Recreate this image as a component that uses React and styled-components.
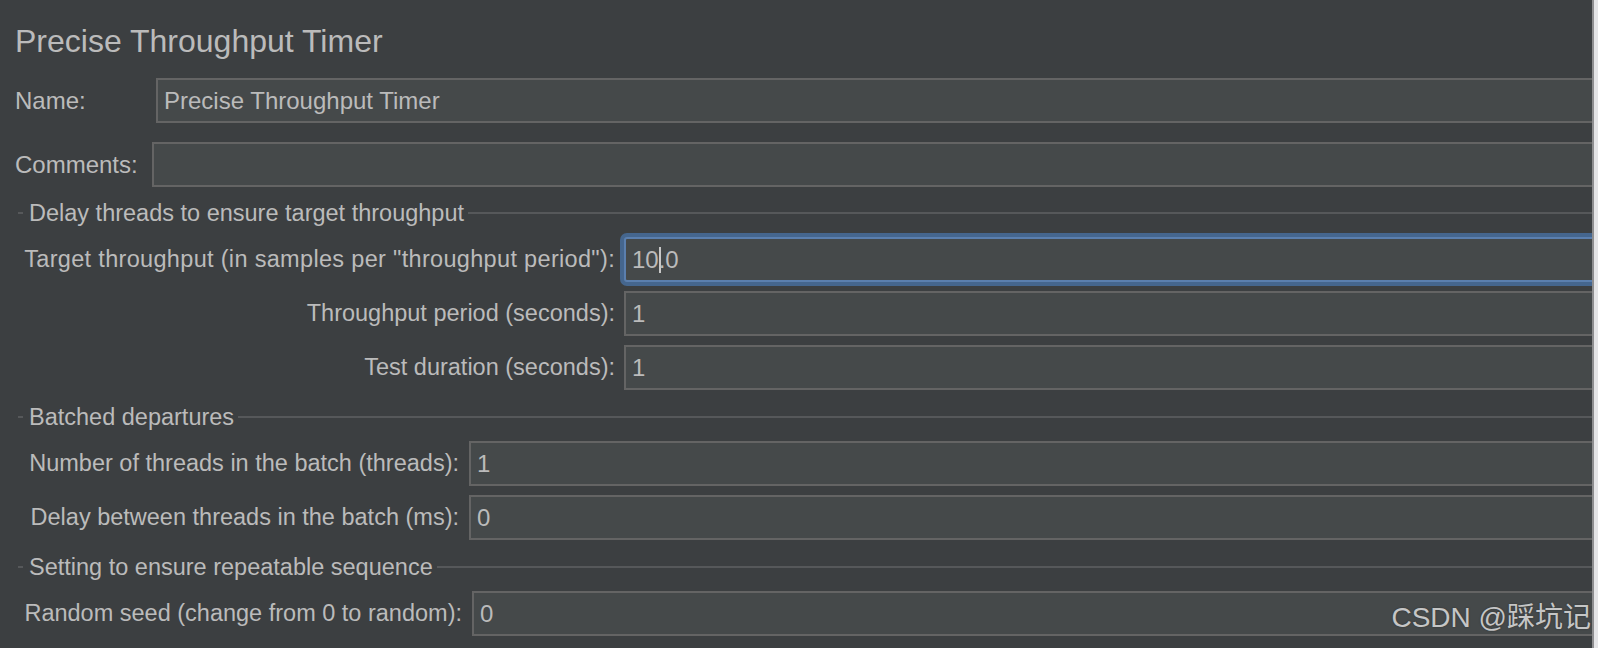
import React from "react";
import styled, { createGlobalStyle } from "styled-components";

const GlobalStyle = createGlobalStyle`
  html, body {
    margin: 0;
    padding: 0;
    background: #3c3f41;
    overflow: hidden;
  }
  * {
    box-sizing: border-box;
  }
`;

const Window = styled.div`
  position: relative;
  display: flex;
  width: 1598px;
  height: 648px;
  background: #3c3f41;
  font-family: "Liberation Sans", Arial, sans-serif;
  color: #bbbbbb;
`;

const Main = styled.div`
  flex: 1;
  display: flex;
  flex-direction: column;
  overflow: hidden;
`;

const SideStrip = styled.div`
  width: 6px;
  background: #e4e4e6;
  border-left: 2px solid #8e8e90;
`;

const Title = styled.h1`
  margin: 21px 0 0 15px;
  height: 40px;
  line-height: 40px;
  font-size: 32px;
  font-weight: normal;
  color: #bbbbbb;
  white-space: nowrap;
`;

const TopRow = styled.div`
  display: flex;
  align-items: center;
  margin-top: ${(p) => p.$top}px;
  padding-left: 15px;
`;

const TopLabel = styled.span`
  width: ${(p) => p.$width}px;
  flex: none;
  font-size: 24px;
  white-space: nowrap;
`;

const Field = styled.div`
  flex: 1;
  display: flex;
  align-items: center;
  height: 45px;
  margin-right: -10px;
  padding-left: 6px;
  background: #45494a;
  border: 2px solid ${(p) => (p.$focused ? "#5b7fae" : "#646464")};
  border-radius: ${(p) => (p.$focused ? "3px" : "0")};
  box-shadow: ${(p) => (p.$focused ? "0 0 0 4px #45668e" : "none")};
  font-size: 24px;
  color: #bbbbbb;
  white-space: nowrap;
`;

const Caret = styled.span`
  display: inline-block;
  width: 2px;
  height: 26px;
  margin-right: -2px;
  background: #c8c8c8;
  vertical-align: -5px;
`;

const Legend = styled.div`
  display: flex;
  align-items: center;
  height: 24px;
  margin-top: ${(p) => p.$top}px;
  font-size: 23.5px;
  white-space: nowrap;
`;

const Dash = styled.span`
  width: 5px;
  height: 2px;
  margin: 0 6px 0 18px;
  background: #56585a;
`;

const Rule = styled.span`
  flex: 1;
  height: 2px;
  margin-left: 4px;
  background: #56585a;
`;

const FieldGrid = styled.div`
  display: grid;
  grid-template-columns: ${(p) => p.$labelWidth}px 1fr;
  column-gap: ${(p) => p.$gap}px;
  row-gap: 9px;
  align-items: center;
  margin-top: 12px;
  padding-left: 24px;
`;

const FieldLabel = styled.span`
  text-align: right;
  font-size: 23.5px;
  letter-spacing: ${(p) => p.$spacing || 0}px;
  white-space: nowrap;
`;

const Watermark = styled.div`
  position: absolute;
  right: 7px;
  bottom: 13px;
  font-family: "Liberation Sans", "Noto Sans CJK SC", sans-serif;
  font-size: 28px;
  color: rgba(225, 225, 225, 0.85);
  text-shadow: 0 0 2px rgba(0, 0, 0, 0.35);
  white-space: nowrap;
`;

const Section = ({ title, top, labelWidth, gap, rows }) => (
  <>
    <Legend $top={top}>
      <Dash />
      {title}
      <Rule />
    </Legend>
    <FieldGrid $labelWidth={labelWidth} $gap={gap}>
      {rows.map((r) => (
        <React.Fragment key={r.label}>
          <FieldLabel $spacing={r.spacing}>{r.label}</FieldLabel>
          <Field $focused={r.focused}>{r.value}</Field>
        </React.Fragment>
      ))}
    </FieldGrid>
  </>
);

export default function App() {
  return (
    <>
      <GlobalStyle />
      <Window>
        <Main>
          <Title>Precise Throughput Timer</Title>
          <TopRow $top={17}>
            <TopLabel $width={141}>Name:</TopLabel>
            <Field>Precise Throughput Timer</Field>
          </TopRow>
          <TopRow $top={19}>
            <TopLabel $width={137}>Comments:</TopLabel>
            <Field />
          </TopRow>
          <Section
            title="Delay threads to ensure target throughput"
            top={14}
            labelWidth={591}
            gap={9}
            rows={[
              {
                label: 'Target throughput (in samples per "throughput period"):',
                spacing: 0.32,
                value: (
                  <>
                    10
                    <Caret />
                    .0
                  </>
                ),
                focused: true,
              },
              { label: "Throughput period (seconds):", value: "1" },
              { label: "Test duration (seconds):", value: "1" },
            ]}
          />
          <Section
            title="Batched departures"
            top={15}
            labelWidth={435}
            gap={10}
            rows={[
              { label: "Number of threads in the batch (threads):", value: "1" },
              { label: "Delay between threads in the batch (ms):", value: "0" },
            ]}
          />
          <Section
            title="Setting to ensure repeatable sequence"
            top={15}
            labelWidth={438}
            gap={10}
            rows={[
              { label: "Random seed (change from 0 to random):", value: "0" },
            ]}
          />
        </Main>
        <SideStrip />
        <Watermark>CSDN @踩坑记</Watermark>
      </Window>
    </>
  );
}
